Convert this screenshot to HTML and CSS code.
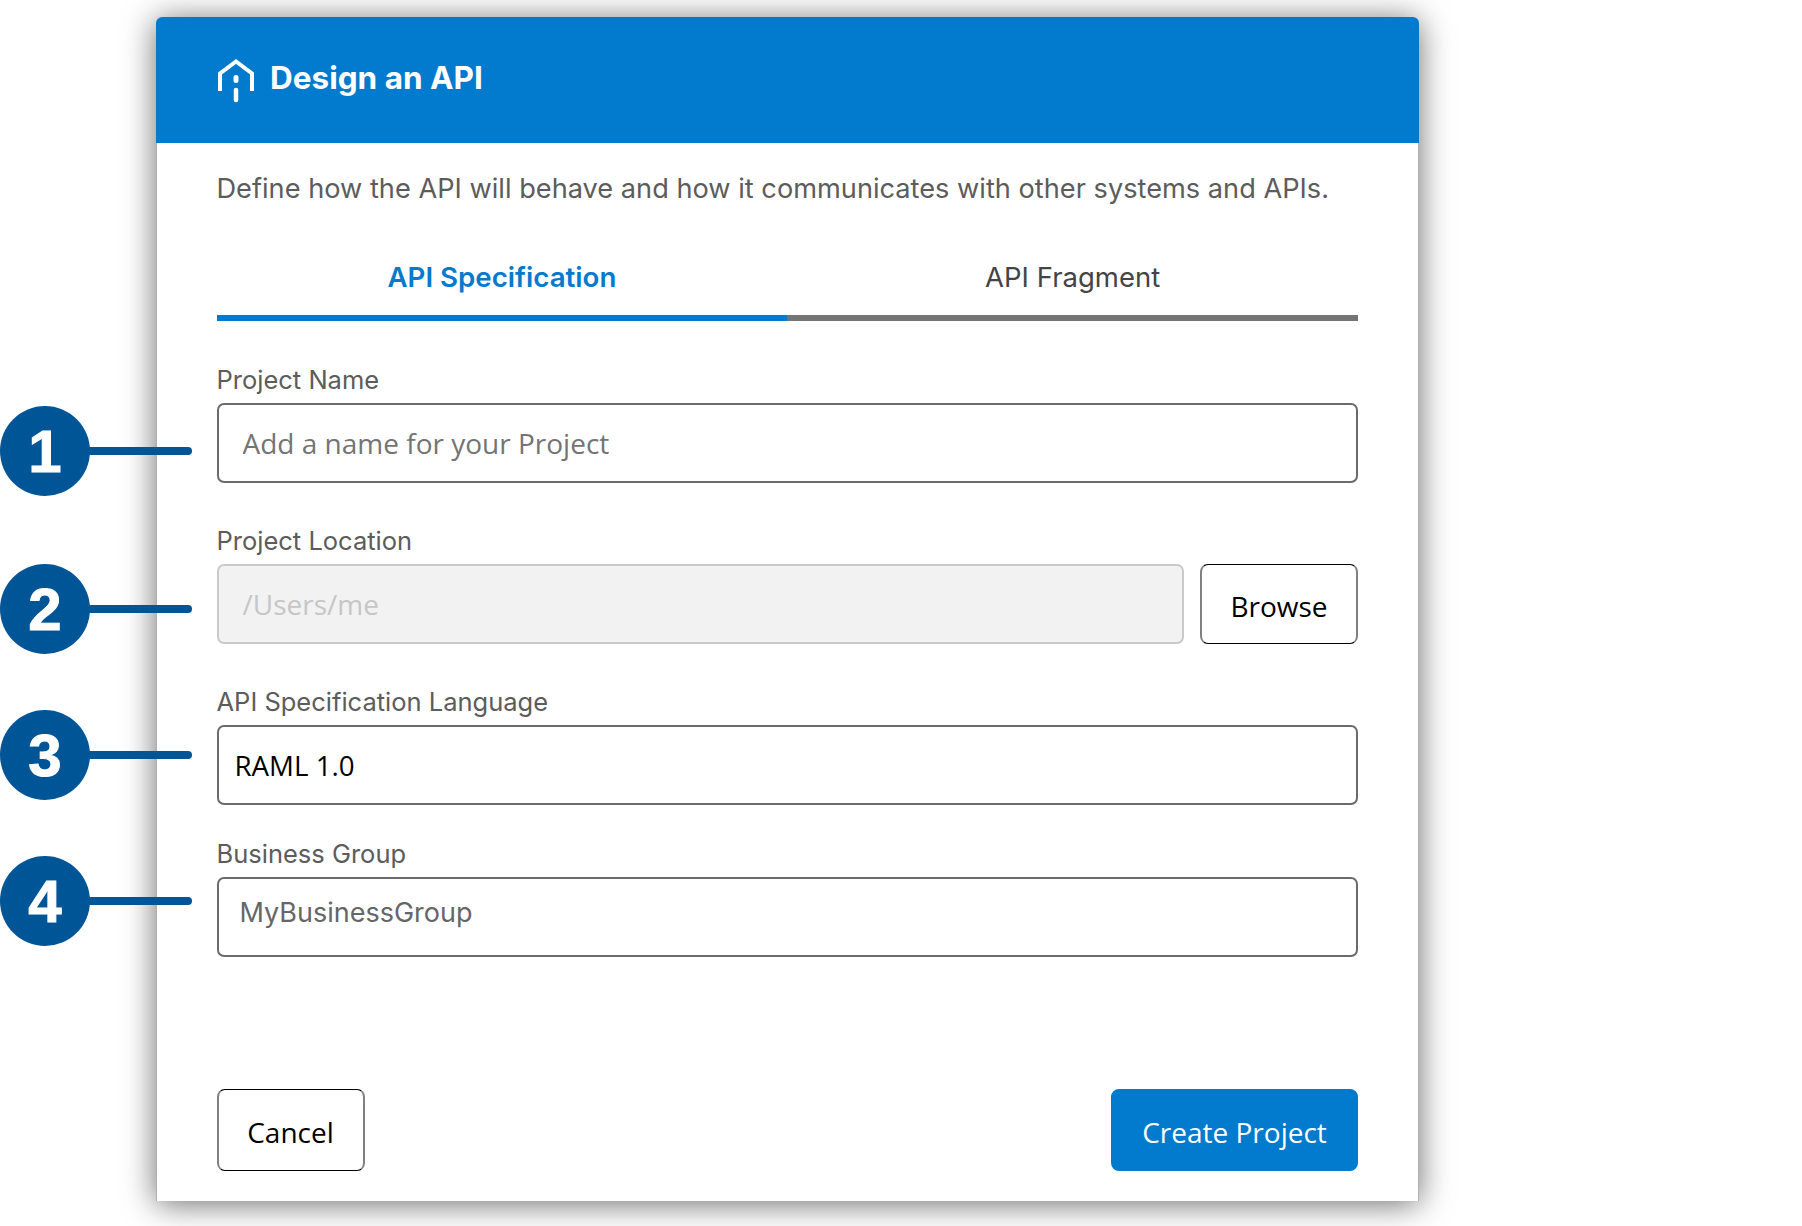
FILE: index.html
```html
<!DOCTYPE html>
<html lang="en">

<head>
  <meta charset="UTF-8">
  <title>Design an API</title>
  <link rel="stylesheet" href="styles.css">
</head>

<body>
  <div class="page">
    <!-- Numbered callouts over the dialog -->
    <div class="callout callout-1"><span class="callout-num">1</span><span class="callout-line"></span></div>
    <div class="callout callout-2"><span class="callout-num">2</span><span class="callout-line"></span></div>
    <div class="callout callout-3"><span class="callout-num">3</span><span class="callout-line"></span></div>
    <div class="callout callout-4"><span class="callout-num">4</span><span class="callout-line"></span></div>

    <div class="dialog">
      <header class="dialog-header">
        <svg class="header-icon" width="38" height="44" viewBox="0 0 38 44" fill="none" stroke="#fff" stroke-width="4" stroke-linecap="round">
          <path d="M3 32V14.500L19 2.500l16 12V32" stroke-linecap="butt" />
          <path d="M19 18.500v3" stroke-width="5" />
          <path d="M19 31v10" stroke-width="4.500" />
        </svg>
        <h1>Design an API</h1>
      </header>

      <div class="dialog-body">
        <p class="intro">Define how the API will behave and how it communicates with other systems and APIs.</p>

        <div class="tabs">
          <div class="tab tab-active">API Specification</div>
          <div class="tab">API Fragment</div>
        </div>

        <div class="field field-first">
          <label>Project Name</label>
          <input type="text" class="input" placeholder="Add a name for your Project">
        </div>

        <div class="field">
          <label>Project Location</label>
          <div class="input-row">
            <input type="text" class="input input-disabled" placeholder="/Users/me" disabled>
            <button class="btn btn-browse">Browse</button>
          </div>
        </div>

        <div class="field field-tight">
          <label>API Specification Language</label>
          <input type="text" class="input input-select" value="RAML 1.0">
        </div>

        <div class="field">
          <label>Business Group</label>
          <input type="text" class="input input-group" value="MyBusinessGroup">
        </div>

        <div class="dialog-footer">
          <button class="btn btn-cancel">Cancel</button>
          <button class="btn btn-primary">Create Project</button>
        </div>
      </div>
    </div>
  </div>
</body>

</html>
```

FILE: styles.css
```css
* {
  margin: 0;
  padding: 0;
  box-sizing: border-box;
}

body {
  background-color: #fff;
  font-family: 'Inter', sans-serif;
  overflow: hidden;
}

.page {
  position: relative;
  width: 1802px;
  height: 1226px;
  padding: 17px 0 0 156px;
}

.dialog {
  display: flex;
  flex-direction: column;
  width: 1263px;
  height: 1184px;
  background: #fff;
  border-radius: 6px 6px 0 0;
  box-shadow: 0 3px 32px rgba(0, 0, 0, 0.58);
}

.dialog-header {
  display: flex;
  align-items: center;
  gap: 15px;
  height: 126px;
  padding: 0 0 0 61px;
  background: #027acd;
  border-radius: 6px 6px 0 0;
  color: #fff;
}

.header-icon {
  margin-top: 1px;
  flex-shrink: 0;
}

h1 {
  font-size: 31.500px;
  font-weight: 700;
  line-height: 40px;
  margin-bottom: 4px;
}

.dialog-body {
  display: flex;
  flex-direction: column;
  flex: 1;
  padding: 30px 61px 30px 60.500px;
  box-shadow: inset 1px 0 #b0b0b0, inset -1px 0 #b0b0b0;
}

.intro {
  font-size: 27.200px;
  line-height: 32px;
  color: #5c5c5c;
  white-space: nowrap;
}

.tabs {
  display: flex;
  margin-top: 56px;
}

.tab {
  flex: 1;
  padding-bottom: 22px;
  border-bottom: 6px solid #747474;
  font-size: 27.500px;
  font-weight: 400;
  line-height: 32px;
  color: #444;
  text-align: center;
}

.tab-active {
  border-bottom-color: #027acd;
  color: #027acd;
  font-weight: 600;
  font-size: 27.700px;
}

.field {
  margin-top: 44px;
}

.field-first {
  margin-top: 45px;
}

.field-tight {
  margin-bottom: -9px;
}

label {
  display: block;
  margin-bottom: 9px;
  font-size: 25.500px;
  line-height: 28px;
  color: #5c5c5c;
}

.input {
  display: block;
  width: 100%;
  height: 80px;
  padding: 0 24px;
  border: 2px solid #6b6b6b;
  border-radius: 7px;
  background: #fff;
  font-family: 'Open Sans', sans-serif;
  font-size: 28px;
  color: #000;
  outline: none;
}

.input::placeholder {
  color: #747474;
  opacity: 1;
}

.input-row {
  display: flex;
  gap: 16px;
}

.input-disabled {
  flex: 1;
  width: auto;
  min-width: 0;
  background: #f2f2f2;
  border-color: #cacaca;
}

.input-disabled::placeholder {
  color: #c6c6c6;
}

.input-select {
  padding-left: 16px;
  font-size: 27.700px;
}

.input-group {
  padding: 0 21px 10px;
  font-family: 'Inter', sans-serif;
  font-size: 27px;
  color: #666;
}

.btn {
  height: 80px;
  padding-top: 4px;
  border-style: solid;
  border-width: 1px 2px;
  border-color: #000 #808080;
  border-radius: 8px;
  background: #fff;
  font-family: 'Open Sans', sans-serif;
  font-size: 28px;
  color: #000;
}

.btn-browse {
  width: 158px;
  flex-shrink: 0;
}

.dialog-footer {
  display: flex;
  justify-content: space-between;
  margin-top: auto;
}

.btn-cancel {
  width: 148px;
  height: 82px;
}

.btn-primary {
  width: 247px;
  height: 82px;
  background: #027acd;
  border-color: #027acd;
  color: #fff;
}

/* callouts */
.callout {
  position: absolute;
  left: 0;
  display: flex;
  align-items: center;
  z-index: 10;
}

.callout-1 { top: 406px; }
.callout-2 { top: 564px; }
.callout-3 { top: 710px; }
.callout-4 { top: 856px; }

.callout-num {
  display: flex;
  align-items: center;
  justify-content: center;
  width: 90px;
  height: 90px;
  border-radius: 50%;
  background: #005596;
  color: #fff;
  font-family: 'Liberation Sans', sans-serif;
  font-size: 60px;
  font-weight: 700;
  -webkit-text-stroke: 1px #fff;
}

.callout-line {
  width: 104px;
  height: 8px;
  margin-left: -2px;
  border-radius: 0 4px 4px 0;
  background: #005596;
}
```
